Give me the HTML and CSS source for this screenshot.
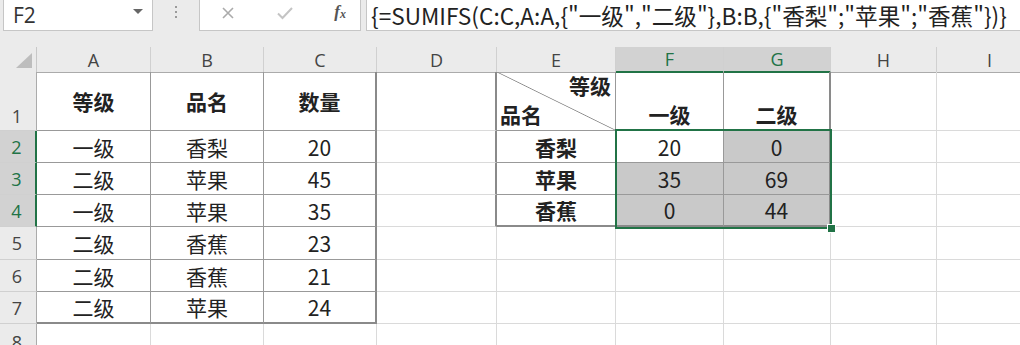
FILE: index.html
```html
<!DOCTYPE html>
<html lang="zh-CN">
<head>
<meta charset="UTF-8">
<title>SUMIFS</title>
<link rel="stylesheet" href="styles.css">
</head>
<body>
<div class="bar">
  <div class="namebox"><span class="name">F2</span><span class="caret"></span></div>
  <div class="grip"><i></i><i></i><i></i></div>
  <div class="fxbox">
    <svg class="ico" width="14" height="14" viewBox="0 0 14 14"><path d="M2 2L12 12M12 2L2 12" stroke="#ababab" stroke-width="1.6" fill="none"/></svg>
    <svg class="ico" width="18" height="14" viewBox="0 0 18 14"><path d="M2 7.5L6.5 12L16 2" stroke="#c4c4c4" stroke-width="2" fill="none"/></svg>
    <span class="fx">f<sub>x</sub></span>
  </div>
  <div class="formula">{=SUMIFS(C:C,A:A,{"一级","二级"},B:B,{"香梨";"苹果";"香蕉"})}</div>
</div>

<div class="sheet">
  <div class="row hdr">
    <div class="corner"><svg width="16" height="15" viewBox="0 0 16 15"><path d="M16 0L16 15L0 15Z" fill="#bdbdbd"/></svg></div>
    <div class="ch">A</div><div class="ch">B</div><div class="ch">C</div><div class="ch">D</div>
    <div class="ch">E</div><div class="ch on">F</div><div class="ch on">G</div><div class="ch">H</div><div class="ch">I</div>
  </div>

  <div class="row r1">
    <div class="rh bot">1</div>
    <div class="c b bold">等级</div><div class="c b bold">品名</div><div class="c b br2 bold">数量</div>
    <div class="c edge"></div>
    <div class="c b diag"><span class="dt">等级</span><span class="db">品名</span></div>
    <div class="c b bold bot">一级</div><div class="c b br2 bold bot">二级</div>
    <div class="c"></div><div class="c"></div>
  </div>

  <div class="row r2">
    <div class="rh on">2</div>
    <div class="c b">一级</div><div class="c b">香梨</div><div class="c b br2">20</div>
    <div class="c edge"></div>
    <div class="c b bold">香梨</div><div class="c b">20</div><div class="c b br2 fill">0</div>
    <div class="c"></div><div class="c"></div>
  </div>

  <div class="row r3">
    <div class="rh on">3</div>
    <div class="c b">二级</div><div class="c b">苹果</div><div class="c b br2">45</div>
    <div class="c edge"></div>
    <div class="c b bold">苹果</div><div class="c b fill">35</div><div class="c b br2 fill">69</div>
    <div class="c"></div><div class="c"></div>
  </div>

  <div class="row r4">
    <div class="rh on">4</div>
    <div class="c b">一级</div><div class="c b">苹果</div><div class="c b br2">35</div>
    <div class="c edge"></div>
    <div class="c b bb2 bold">香蕉</div><div class="c b bb2 fill">0</div><div class="c b br2 bb2 fill">44</div>
    <div class="c"></div><div class="c"></div>
  </div>

  <div class="row r5">
    <div class="rh">5</div>
    <div class="c b">二级</div><div class="c b">香蕉</div><div class="c b br2">23</div>
    <div class="c"></div><div class="c"></div><div class="c"></div><div class="c"></div><div class="c"></div><div class="c"></div>
  </div>

  <div class="row r6">
    <div class="rh">6</div>
    <div class="c b">二级</div><div class="c b">香蕉</div><div class="c b br2">21</div>
    <div class="c"></div><div class="c"></div><div class="c"></div><div class="c"></div><div class="c"></div><div class="c"></div>
  </div>

  <div class="row r7">
    <div class="rh">7</div>
    <div class="c b bb2">二级</div><div class="c b bb2">苹果</div><div class="c b br2 bb2">24</div>
    <div class="c"></div><div class="c"></div><div class="c"></div><div class="c"></div><div class="c"></div><div class="c"></div>
  </div>

  <div class="row r8">
    <div class="rh top">8</div>
    <div class="c"></div><div class="c"></div><div class="c"></div><div class="c"></div>
    <div class="c"></div><div class="c"></div><div class="c"></div><div class="c"></div><div class="c"></div>
  </div>

  <div class="sel"></div>
  <div class="handle"></div>
</div>
</body>
</html>
```

FILE: styles.css
```css
body {
  margin: 0;
  overflow: hidden;
  background: #fff;
  color: #222;
  font-family: "Noto Sans CJK SC", sans-serif;
}

/* formula bar */
.bar {
  display: flex;
  align-items: flex-start;
  height: 47px;
  background: #ebebeb;
}
.namebox {
  box-sizing: border-box;
  width: 150px;
  height: 31px;
  margin-left: 3px;
  padding: 0 9px 0 9px;
  display: flex;
  align-items: center;
  justify-content: space-between;
  background: #fff;
  border: 1px solid #c6c6c6;
  border-top: none;
}
.name {
  font-family: "Open Sans", sans-serif;
  font-size: 21px;
  color: #333;
}
.caret {
  width: 0;
  height: 0;
  border-left: 5px solid transparent;
  border-right: 5px solid transparent;
  border-top: 5px solid #666;
  margin-bottom: 7px;
}
.grip {
  width: 46px;
  height: 24px;
  display: flex;
  flex-direction: column;
  align-items: center;
  justify-content: center;
  gap: 3px;
}
.grip i {
  width: 2px;
  height: 2px;
  background: #9a9a9a;
}
.fxbox {
  box-sizing: border-box;
  width: 162px;
  height: 31px;
  display: flex;
  align-items: center;
  justify-content: space-between;
  padding: 0 14px 0 21px;
  background: #fff;
  border: 1px solid #c6c6c6;
  border-top: none;
}
.ico {
  display: block;
  margin-bottom: 4px;
}
.fx {
  font-family: "Liberation Serif", serif;
  font-style: italic;
  font-weight: bold;
  font-size: 17px;
  color: #555;
  margin-bottom: 6px;
}
.fx sub {
  font-size: 12px;
  vertical-align: -1px;
}
.formula {
  box-sizing: border-box;
  flex: 1;
  height: 31px;
  margin-left: 5px;
  padding: 0 0 0 4px;
  background: #fff;
  border: 1px solid #c6c6c6;
  border-top: none;
  border-right: none;
  font-size: 22.6px;
  line-height: 31px;
  white-space: nowrap;
  overflow: hidden;
  color: #222;
}

/* sheet grid */
.sheet {
  position: relative;
}
.row {
  display: grid;
  grid-template-columns: 37px 114px 113px 113px 120px 119px 108px 107px 106px 106px;
  height: 32px;
}
.row > div {
  box-sizing: border-box;
  display: flex;
  align-items: center;
  justify-content: center;
}
.hdr { height: 25px; }
.r1 { height: 59px; }
.r5 { height: 33px; }
.r8 { height: 24px; }

.corner {
  background: #ebebeb;
  border-right: 1px solid #c8c8c8;
  border-bottom: 1px solid #ababab;
  justify-content: flex-end !important;
  align-items: flex-end !important;
  padding: 0 4px 4px 0;
}
.ch {
  background: #ebebeb;
  border-right: 1px solid #d0d0d0;
  border-bottom: 1px solid #ababab;
  font-family: "Open Sans", sans-serif;
  font-size: 18px;
  color: #444;
}
.ch.on {
  background: #d2d2d2;
  color: #217346;
  border-bottom: 2px solid #217346;
}
.rh {
  background: #ebebeb;
  border-right: 1px solid #ababab;
  border-bottom: 1px solid #d0d0d0;
  font-family: "Open Sans", sans-serif;
  font-size: 18px;
  color: #444;
  padding-right: 2px;
}
.rh.on {
  background: #d2d2d2;
  color: #217346;
  border-right: 2px solid #217346;
}
.rh.bot { align-items: flex-end !important; padding-bottom: 2px; }
.rh.top { align-items: flex-start !important; padding-top: 6px; }

.c {
  border-right: 1px solid #dadada;
  border-bottom: 1px solid #dadada;
  font-size: 21px;
}
.c.b {
  border-right-color: #999;
  border-bottom-color: #999;
}
.c.br2 { border-right: 2px solid #8a8a8a; }
.c.bb2 { border-bottom: 2px solid #8a8a8a; }
.c.edge { border-right: 2px solid #8a8a8a; }
.c.fill { background: #c9c9c9; }
.bold { font-weight: bold; }
.c.bot { align-items: flex-end !important; padding-bottom: 1px; }

.diag {
  flex-direction: column;
  align-items: stretch !important;
  justify-content: space-between !important;
  padding: 0 4px 2px 3px;
  font-weight: bold;
  line-height: 27px;
  background: linear-gradient(to top right, transparent calc(50% - 0.8px), #8c8c8c 50%, transparent calc(50% + 0.8px));
}
.dt { text-align: right; }
.db { text-align: left; }

/* selection over F2:G4 */
.sel {
  position: absolute;
  left: 615px;
  top: 82px;
  width: 217px;
  height: 100px;
  box-sizing: border-box;
  border: 2px solid #217346;
}
.handle {
  position: absolute;
  left: 827px;
  top: 177px;
  width: 7px;
  height: 7px;
  background: #217346;
  border: 1px solid #fff;
}
```
